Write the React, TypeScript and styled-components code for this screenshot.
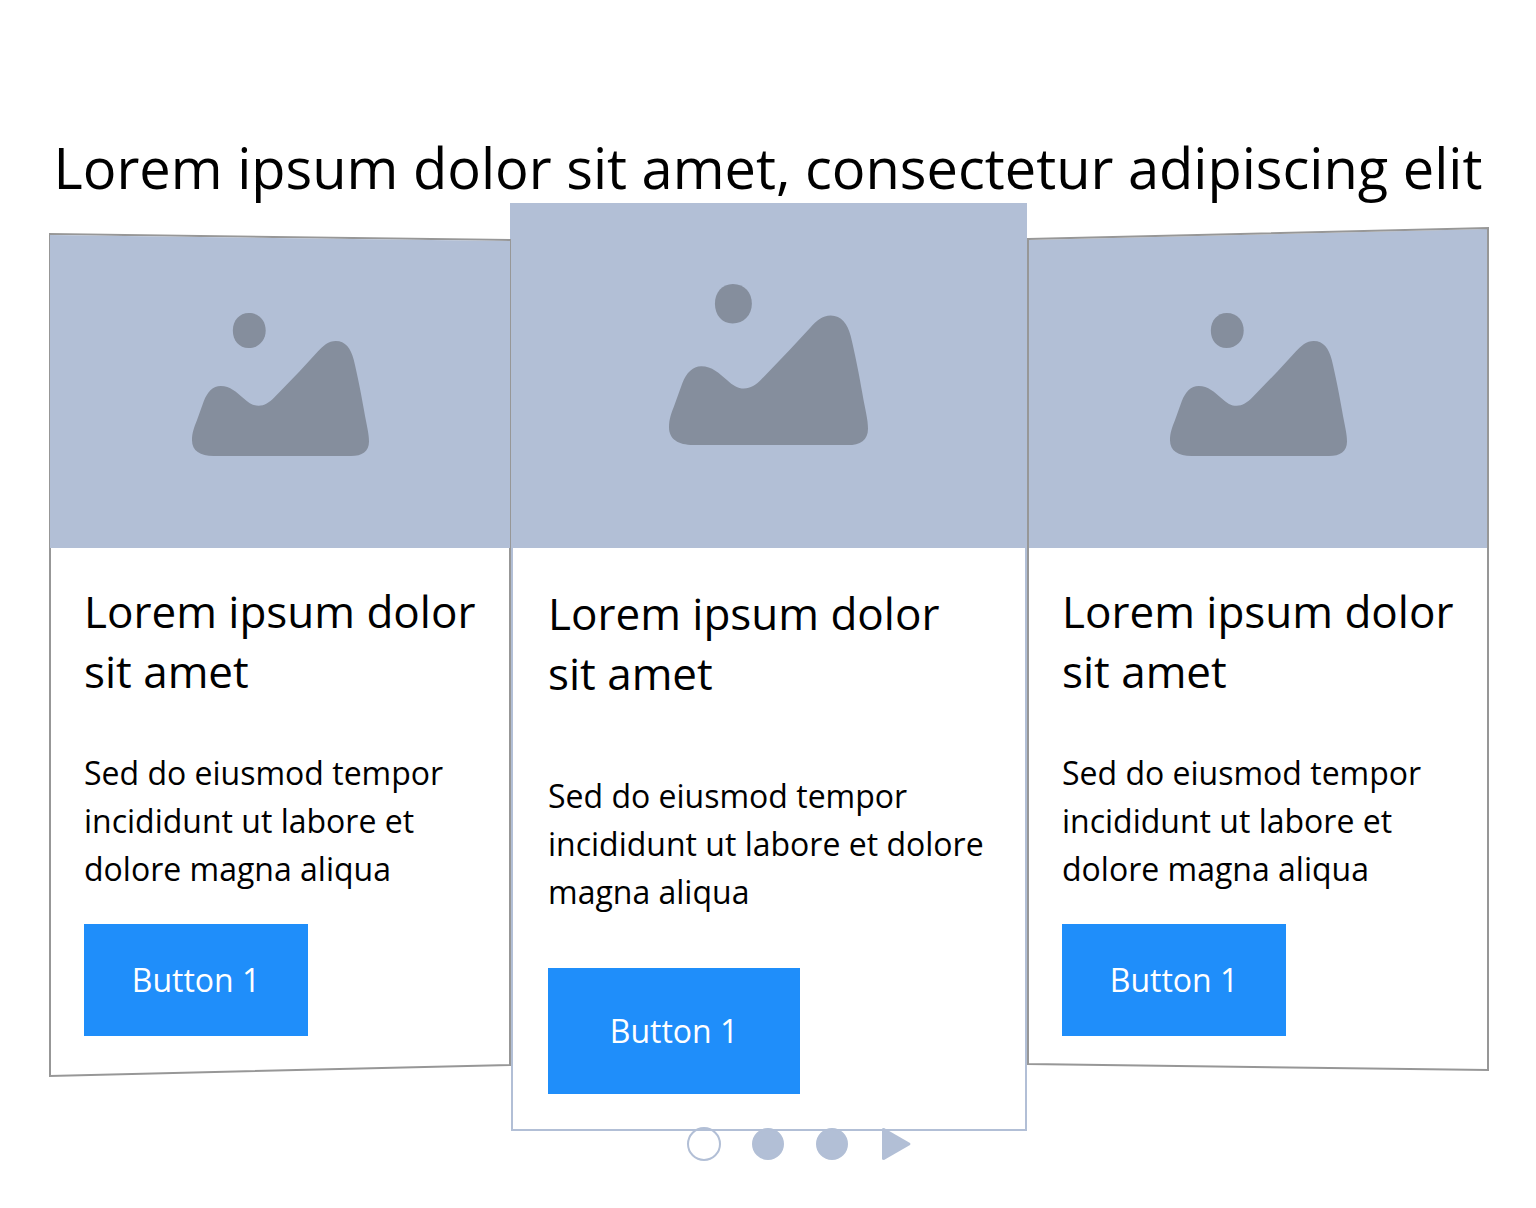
import React from "react";
import styled, { createGlobalStyle } from "styled-components";

const tint = "#b2bfd6";
const frameGrey = "#979797";
const blue = "#1f8efa";

type Variant = "left" | "center" | "right";

const GlobalStyle = createGlobalStyle`
  *, *::before, *::after { box-sizing: border-box; }
  body {
    margin: 0;
    background: #fff;
    color: #000;
    font-family: "Open Sans", "Noto Sans", sans-serif;
  }
  h1, h2, p { margin: 0; font-weight: 400; }
`;

const Page = styled.main`
  padding: 131px 47px 47px 49px;
`;

const Title = styled.h1`
  margin-right: 2px;
  font-size: 56px;
  line-height: 72px;
  text-align: center;
  white-space: nowrap;
`;

const Cards = styled.section`
  display: grid;
  grid-template-columns: minmax(0, 462fr) minmax(0, 516fr) minmax(0, 462fr);
  align-items: start;
`;

const cardTop = { left: 30, center: 0, right: 24 };

const CardBox = styled.article<{ $variant: Variant }>`
  position: relative;
  z-index: ${(p) => (p.$variant === "center" ? 0 : 1)};
  margin-top: ${(p) => cardTop[p.$variant]}px;
`;

const Frame = styled.svg`
  position: absolute;
  inset: 0;
  width: 100%;
  height: 100%;
  overflow: visible;
  pointer-events: none;
`;

const mediaShape = {
  left: `
    height: 315px;
    margin: 0 1px;
    clip-path: polygon(0 2px, 100% 8px, 100% 100%, 0 100%);
  `,
  center: `
    height: 345px;
    margin-left: -1px;
  `,
  right: `
    height: 321px;
    margin: 0 2px;
    clip-path: polygon(0 13px, 100% 2px, 100% 100%, 0 100%);
  `,
};

const Media = styled.div<{ $variant: Variant }>`
  position: relative;
  display: flex;
  justify-content: center;
  align-items: flex-end;
  padding-bottom: ${(p) => (p.$variant === "center" ? 103 : 92)}px;
  background: ${tint};
  ${(p) => mediaShape[p.$variant]}
`;

const Picture = styled.svg<{ $large: boolean }>`
  display: block;
  width: ${(p) => (p.$large ? 199 : 177)}px;
  height: ${(p) => (p.$large ? 161 : 143)}px;
  fill: #858e9d;
`;

const bodyShape = {
  left: "padding: 33px 24px 41px 35px;",
  center: `padding: 35px 32px 35px 35px; border: 2px solid ${tint}; border-top: 0;`,
  right: "padding: 33px 24px 35px 35px;",
};

const Body = styled.div<{ $variant: Variant }>`
  position: relative;
  display: flex;
  flex-direction: column;
  align-items: flex-start;
  ${(p) => bodyShape[p.$variant]}
`;

const Heading = styled.h2`
  font-size: 44px;
  line-height: 60px;
`;

const Text = styled.p<{ $large: boolean }>`
  margin: ${(p) => (p.$large ? "69px 0 52px" : "48px 0 31px")};
  font-size: 32px;
  line-height: 48px;
`;

const Action = styled.button<{ $large: boolean }>`
  padding: 0;
  width: ${(p) => (p.$large ? 252 : 224)}px;
  height: ${(p) => (p.$large ? 126 : 112)}px;
  border: 0;
  background: ${blue};
  color: #fff;
  font: inherit;
  font-size: 32px;
  line-height: 48px;
  cursor: pointer;
`;

const Pager = styled.nav`
  position: relative;
  display: flex;
  justify-content: center;
  gap: 30px;
  margin-top: -4px;
  padding-left: 62px;
`;

const PagerButton = styled.button`
  display: grid;
  place-items: center;
  width: 34px;
  height: 34px;
  padding: 0;
  border: 0;
  background: none;
  cursor: pointer;
`;

const Dot = styled.span<{ $active: boolean }>`
  width: ${(p) => (p.$active ? 34 : 32)}px;
  height: ${(p) => (p.$active ? 34 : 32)}px;
  border: 2px solid ${tint};
  border-radius: 50%;
  background: ${(p) => (p.$active ? "transparent" : tint)};
`;

const Arrow = styled.svg`
  width: 34px;
  height: 34px;
  fill: ${tint};
`;

const framePoints = {
  left: "1,1 461,7 461,832 1,843",
  right: "1,12 461,1 461,843 1,837",
};

function Card({ variant }: { variant: Variant }) {
  const large = variant === "center";
  return (
    <CardBox $variant={variant}>
      {variant === "left" && <CardFrame points={framePoints.left} />}
      <Media $variant={variant}>
        <Picture $large={large} viewBox="57 41 598 482" preserveAspectRatio="none" aria-hidden="true">
          <path d="M249 41C285 41 306 68 306 100C306 134 282 159 248 159C216 159 195 134 195 100C195 66 217 41 249 41Z" />
          <path d="M57 470C57 445 64 428 74 402L97 338C109 307 128 287 154 287C186 287 208 308 232 329C248 344 264 354 282 354C302 354 318 343 334 327L420 238L482 171C500 151 518 135 543 135C575 135 594 160 603 197C616 250 629 316 638 368C647 420 655 446 655 474C655 508 632 523 594 523L130 523C85 523 57 506 57 470Z" />
        </Picture>
      </Media>
      {variant === "right" && <CardFrame points={framePoints.right} />}
      <Body $variant={variant}>
        <Heading>Lorem ipsum dolor sit amet</Heading>
        <Text $large={large}>Sed do eiusmod tempor incididunt ut labore et dolore magna aliqua</Text>
        <Action type="button" $large={large}>Button 1</Action>
      </Body>
    </CardBox>
  );
}

function CardFrame({ points }: { points: string }) {
  return (
    <Frame viewBox="0 0 462 844" preserveAspectRatio="none" aria-hidden="true">
      <polygon points={points} fill="none" stroke={frameGrey} strokeWidth="2" vectorEffect="non-scaling-stroke" />
    </Frame>
  );
}

export default function App() {
  return (
    <>
      <GlobalStyle />
      <Page>
        <Title>Lorem ipsum dolor sit amet, consectetur adipiscing elit</Title>
        <Cards>
          <Card variant="left" />
          <Card variant="center" />
          <Card variant="right" />
        </Cards>
        <Pager aria-label="Slides">
          {[1, 2, 3].map((n) => (
            <PagerButton key={n} type="button" aria-label={`Slide ${n}`}>
              <Dot $active={n === 1} />
            </PagerButton>
          ))}
          <PagerButton type="button" aria-label="Next slide">
            <Arrow viewBox="0 0 34 34" aria-hidden="true">
              <path d="M3 2Q3 1 5 1L31 16Q32 17 31 18L5 33Q3 33 3 32Z" />
            </Arrow>
          </PagerButton>
        </Pager>
      </Page>
    </>
  );
}
